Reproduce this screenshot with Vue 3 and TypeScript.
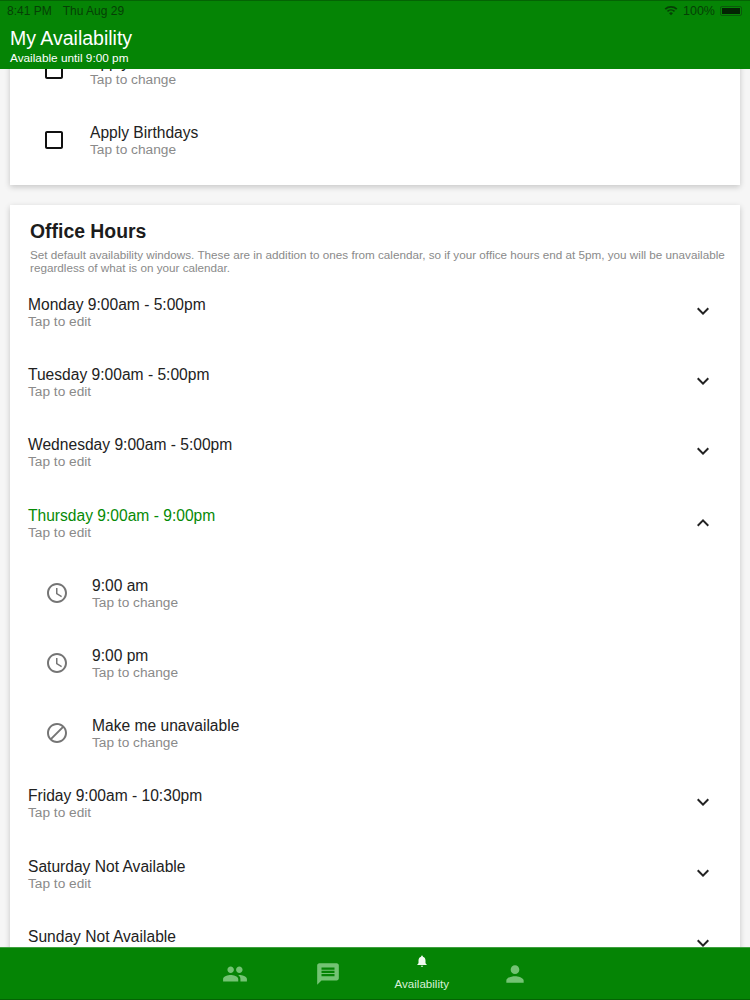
<script setup lang="ts">
const P = {
  group: 'M16 11c1.66 0 2.99-1.34 2.99-3S17.66 5 16 5c-1.66 0-3 1.34-3 3s1.34 3 3 3zm-8 0c1.66 0 2.99-1.34 2.99-3S9.66 5 8 5C6.34 5 5 6.34 5 8s1.34 3 3 3zm0 2c-2.33 0-7 1.17-7 3.5V19h14v-2.5c0-2.33-4.67-3.5-7-3.5zm8 0c-.29 0-.62.02-.97.05 1.16.84 1.97 1.97 1.97 3.45V19h6v-2.5c0-2.33-4.67-3.5-7-3.5z',
  message: 'M20 2H4c-1.1 0-1.99.9-1.99 2L2 22l4-4h14c1.1 0 2-.9 2-2V4c0-1.1-.9-2-2-2zm-2 12H6v-2h12v2zm0-3H6V9h12v2zm0-3H6V6h12v2z',
  bell: 'M12 22c1.1 0 2-.9 2-2h-4c0 1.1.9 2 2 2zm6-6v-5c0-3.07-1.63-5.64-4.5-6.32V4c0-.83-.67-1.5-1.5-1.5s-1.5.67-1.5 1.5v.68C7.64 5.36 6 7.92 6 11v5l-2 2v1h16v-1l-2-2z',
  person: 'M12 12c2.21 0 4-1.79 4-4s-1.79-4-4-4-4 1.79-4 4 1.79 4 4 4zm0 2c-2.67 0-8 1.34-8 4v2h16v-2c0-2.66-5.33-4-8-4z',
  clock: 'M11.99 2C6.47 2 2 6.48 2 12s4.47 10 9.99 10C17.52 22 22 17.52 22 12S17.52 2 11.99 2zM12 20c-4.42 0-8-3.58-8-8s3.58-8 8-8 8 3.58 8 8-3.58 8-8 8zm.5-13H11v6l5.25 3.15.75-1.23-4.5-2.67z',
  block: 'M12 2C6.48 2 2 6.48 2 12s4.48 10 10 10 10-4.48 10-10S17.52 2 12 2zM4 12c0-4.42 3.58-8 8-8 1.85 0 3.55.63 4.9 1.69L5.69 16.9C4.63 15.55 4 13.85 4 12zm8 8c-1.85 0-3.55-.63-4.9-1.69L18.31 7.1C19.37 8.45 20 10.15 20 12c0 4.42-3.58 8-8 8z',
  down: 'M16.59 8.59L12 13.17 7.41 8.59 6 10l6 6 6-6z',
  up: 'M12 8l-6 6 1.41 1.41L12 10.83l4.59 4.58L18 14z',
  box: 'M19 5v14H5V5h14m0-2H5c-1.1 0-2 .9-2 2v14c0 1.1.9 2 2 2h14c1.1 0 2-.9 2-2V5c0-1.1-.9-2-2-2z',
}
const before = ['Monday 9:00am - 5:00pm', 'Tuesday 9:00am - 5:00pm', 'Wednesday 9:00am - 5:00pm']
const after = ['Friday 9:00am - 10:30pm', 'Saturday Not Available', 'Sunday Not Available']
const details = [
  { icon: P.clock, title: '9:00 am' },
  { icon: P.clock, title: '9:00 pm' },
  { icon: P.block, title: 'Make me unavailable' },
]
const tabs = [
  { icon: P.group, label: '', active: false },
  { icon: P.message, label: '', active: false },
  { icon: P.bell, label: 'Availability', active: true },
  { icon: P.person, label: '', active: false },
]
</script>

<template>
  <div class="app">
    <header class="header">
      <div class="status">
        <div class="status-left"><span>8:41 PM</span><span>Thu Aug 29</span></div>
        <div class="status-right">
          <svg class="wifi" viewBox="0 0 16 12" width="14" height="11">
            <path d="M8 11.5 5.8 9a3.2 3.2 0 0 1 4.4 0zM4.6 7.7 3.3 6.3a7 7 0 0 1 9.4 0l-1.3 1.4a5 5 0 0 0-6.800 0zM2.100 5 .7 3.600a10.800 10.800 0 0 1 14.600 0L13.900 5a8.800 8.800 0 0 0-11.800 0z" />
          </svg>
          <span>100%</span>
          <span class="battery"><span class="battery-fill"></span></span>
        </div>
      </div>
      <h1 class="app-title">My Availability</h1>
      <p class="app-sub">Available until 9:00 pm</p>
    </header>

    <main class="main">
      <section class="card card-top">
        <div class="check-row">
          <svg class="check-icon" viewBox="0 0 24 24"><path :d="P.box" /></svg>
          <div class="row-text">
            <div class="row-title">Apply Calendar</div>
            <div class="row-sub">Tap to change</div>
          </div>
        </div>
        <div class="check-row">
          <svg class="check-icon" viewBox="0 0 24 24"><path :d="P.box" /></svg>
          <div class="row-text">
            <div class="row-title">Apply Birthdays</div>
            <div class="row-sub">Tap to change</div>
          </div>
        </div>
      </section>

      <section class="card card-hours">
        <h2 class="hours-title">Office Hours</h2>
        <p class="hours-desc">Set default availability windows. These are in addition to ones from calendar, so if your office hours end at 5pm, you will be unavailable regardless of what is on your calendar.</p>

        <div v-for="d in before" :key="d" class="day-row">
          <div class="row-text">
            <div class="row-title">{{ d }}</div>
            <div class="row-sub">Tap to edit</div>
          </div>
          <svg class="chevron chevron-down" viewBox="0 0 24 24"><path :d="P.down" /></svg>
        </div>

        <div class="day-row">
          <div class="row-text">
            <div class="row-title open">Thursday 9:00am - 9:00pm</div>
            <div class="row-sub">Tap to edit</div>
          </div>
          <svg class="chevron" viewBox="0 0 24 24"><path :d="P.up" /></svg>
        </div>

        <div v-for="x in details" :key="x.title" class="detail-row">
          <svg class="detail-icon" viewBox="0 0 24 24"><path :d="x.icon" /></svg>
          <div class="row-text">
            <div class="row-title">{{ x.title }}</div>
            <div class="row-sub">Tap to change</div>
          </div>
        </div>

        <div v-for="d in after" :key="d" class="day-row">
          <div class="row-text">
            <div class="row-title">{{ d }}</div>
            <div class="row-sub">Tap to edit</div>
          </div>
          <svg class="chevron chevron-down" viewBox="0 0 24 24"><path :d="P.down" /></svg>
        </div>
      </section>
    </main>

    <nav class="nav">
      <div v-for="t in tabs" :key="t.icon" class="tab" :class="{ active: t.active }">
        <svg class="tab-icon" viewBox="0 0 24 24"><path :d="t.icon" /></svg>
        <span v-if="t.label" class="tab-label">{{ t.label }}</span>
      </div>
    </nav>
  </div>
</template>

<style scoped>
.app {
  width: 750px;
  height: 1000px;
  display: flex;
  flex-direction: column;
  overflow: hidden;
  background: #f6f6f6;
  font-family: "Liberation Sans", Arial, sans-serif;
}
.header {
  position: relative;
  z-index: 2;
  flex: none;
  box-sizing: border-box;
  height: 69px;
  padding: 0 8px 0 10px;
  background: #058405;
  border-top: 1px solid #046304;
  color: #fff;
}
.status {
  display: flex;
  justify-content: space-between;
  align-items: center;
  height: 19px;
  margin-left: -3px;
  font-size: 12px;
  color: #063f06;
}
.status-left {
  display: flex;
  gap: 11px;
}
.status-right {
  display: flex;
  align-items: center;
  gap: 5px;
  font-size: 12.500px;
}
.wifi {
  fill: #063f06;
}
.battery {
  display: block;
  box-sizing: border-box;
  width: 22px;
  height: 10px;
  padding: 1px;
  border: 1px solid #0b5a0b;
  border-radius: 2px;
}
.battery-fill {
  display: block;
  height: 100%;
  background: #032403;
}
.app-title {
  margin: 7px 0 0;
  font-size: 19.500px;
  line-height: 23px;
  font-weight: 400;
}
.app-sub {
  margin: 1px 0 0;
  font-size: 11.800px;
  line-height: 14px;
}
.main {
  flex: 1;
  min-height: 0;
  overflow: hidden;
  padding: 0 10px;
}
.card {
  background: #fff;
  box-shadow: 0 2px 6px rgba(0, 0, 0, 0.2);
}
.card-top {
  margin-top: -34px;
  padding-bottom: 10px;
}
.card-hours {
  margin-top: 20px;
  padding-top: 14px;
}
.check-row {
  display: flex;
  align-items: center;
  height: 70px;
  padding-left: 32px;
}
.check-icon {
  width: 24px;
  height: 24px;
  margin-right: 24px;
  fill: #111;
}
.row-text {
  padding-top: 2px;
}
.row-title {
  font-size: 15.600px;
  line-height: 18px;
  color: #222;
}
.row-title.open {
  color: #068a06;
}
.row-sub {
  margin-top: -1px;
  font-size: 13.700px;
  line-height: 17px;
  color: #8a8a8a;
}
.hours-title {
  margin: 0;
  padding-left: 20px;
  font-size: 19.400px;
  line-height: 24px;
  font-weight: 700;
  color: #1c1c1c;
}
.hours-desc {
  margin: 5px 0 0;
  padding: 0 10px 0 20px;
  font-size: 11.700px;
  line-height: 13px;
  color: #8a8a8a;
}
.day-row {
  display: flex;
  align-items: center;
  justify-content: space-between;
  height: 70.200px;
  padding: 0 25px 0 18px;
}
.hours-desc + .day-row {
  margin-top: 3px;
}
.chevron {
  width: 24px;
  height: 24px;
  fill: #222;
}
.chevron-down {
  margin-bottom: 2px;
}
.detail-row {
  display: flex;
  align-items: center;
  height: 70.200px;
  padding-left: 35px;
}
.detail-icon {
  width: 24px;
  height: 24px;
  margin-right: 23px;
  fill: #757575;
}
.nav {
  position: relative;
  z-index: 2;
  flex: none;
  box-sizing: border-box;
  height: 53px;
  display: flex;
  justify-content: center;
  background: #058405;
  border-top: 1px solid #3fa03f;
  border-bottom: 1px solid #046304;
}
.tab {
  width: 93.500px;
  display: flex;
  flex-direction: column;
  align-items: center;
  justify-content: center;
}
.tab-icon {
  width: 26px;
  height: 26px;
  fill: #74c374;
}
.tab.active {
  justify-content: flex-start;
  padding-top: 6px;
}
.tab.active .tab-icon {
  width: 14px;
  height: 14px;
  fill: #f0fbf0;
}
.tab-label {
  margin-top: 9px;
  font-size: 11.600px;
  line-height: 14px;
  color: #d8f0d8;
}
</style>
